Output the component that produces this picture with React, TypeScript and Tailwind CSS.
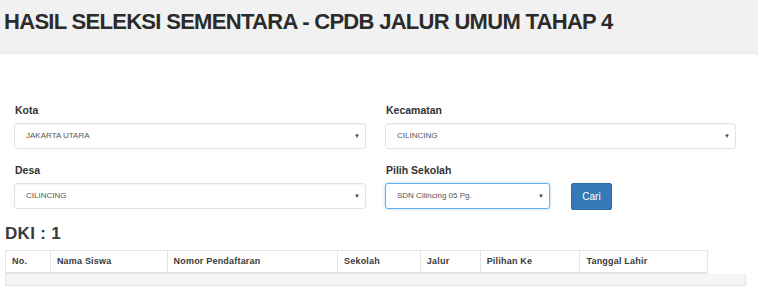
import React from 'react'

const columns = [
  { label: 'No.', w: 'w-[45px]' },
  { label: 'Nama Siswa', w: 'w-[117px]' },
  { label: 'Nomor Pendaftaran', w: 'w-[171px]' },
  { label: 'Sekolah', w: 'w-[83px]' },
  { label: 'Jalur', w: 'w-[60px]' },
  { label: 'Pilihan Ke', w: 'w-[100px]' },
  { label: 'Tanggal Lahir', w: 'w-[127px]' },
]

function Select({ value, focus, className }: { value: string; focus?: boolean; className?: string }) {
  return (
    <div
      className={
        'flex h-[26px] items-center justify-between rounded-[3px] bg-white pl-[11px] pr-[5px] ' +
        (focus
          ? 'border border-[#66afe9] shadow-[0_0_3px_rgba(102,175,233,0.6)] '
          : 'border border-[#e3e3e3] shadow-[inset_0_1px_1px_rgba(0,0,0,0.04)] ') +
        (className || '')
      }
    >
      <span className="text-[8px] text-[#555]">{value}</span>
      <span className="text-[6px] text-[#444]">▼</span>
    </div>
  )
}

function App() {
  return (
    <div className="h-[295px] w-[758px] overflow-hidden bg-white font-['Liberation_Sans',Arial,sans-serif] text-[#333]">
      <div className="h-[54px] border-b border-[#e9e9e9] bg-[#f1f1f1] pl-[4px] pt-[8px]">
        <h1 className="text-[22px] font-bold leading-[27px] tracking-[-0.7px] text-[#2b2b2b]">
          HASIL SELEKSI SEMENTARA - CPDB JALUR UMUM TAHAP 4
        </h1>
      </div>

      <div className="grid grid-cols-[352px_351px] gap-x-[19px] pl-[14px] pt-[50px]">
        <div>
          <div className="mb-[7px] pl-px text-[10.5px] font-bold leading-[12px]">Kota</div>
          <Select value="JAKARTA UTARA" />
        </div>
        <div>
          <div className="mb-[7px] pl-px text-[10.5px] font-bold leading-[12px]">Kecamatan</div>
          <Select value="CILINCING" />
        </div>
        <div className="mt-[15px]">
          <div className="mb-[7px] pl-px text-[10.5px] font-bold leading-[12px]">Desa</div>
          <Select value="CILINCING" />
        </div>
        <div className="mt-[15px]">
          <div className="mb-[7px] pl-px text-[10.5px] font-bold leading-[12px]">Pilih Sekolah</div>
          <div className="flex items-start gap-[21px]">
            <Select value="SDN Cilincing 05 Pg." focus className="w-[165px]" />
            <button className="h-[27px] w-[41px] rounded-[2px] border border-[#2e6da4] bg-[#337ab7] text-[10px] text-white">
              Cari
            </button>
          </div>
        </div>
      </div>

      <div className="pl-[5px] pt-[14px]">
        <div className="text-[17px] font-bold leading-[20px] tracking-[0.3px] text-[#3a3a3a]">DKI : 1</div>
        <div className="mt-[6px] flex h-[24px] w-[703px] border border-b-2 border-[#e5e5e5]">
          {columns.map((c, i) => (
            <div
              key={c.label}
              className={
                c.w +
                ' flex items-center pl-[6px] text-[9px] font-bold tracking-[0.2px] text-[#3a3a3a] ' +
                (i < columns.length - 1 ? 'border-r border-[#e5e5e5]' : '')
              }
            >
              {c.label}
            </div>
          ))}
        </div>
        <div className="h-[12px] w-[741px] border border-t-0 border-[#e5e5e5] bg-[#f5f5f5]" />
      </div>
    </div>
  )
}

export default App
